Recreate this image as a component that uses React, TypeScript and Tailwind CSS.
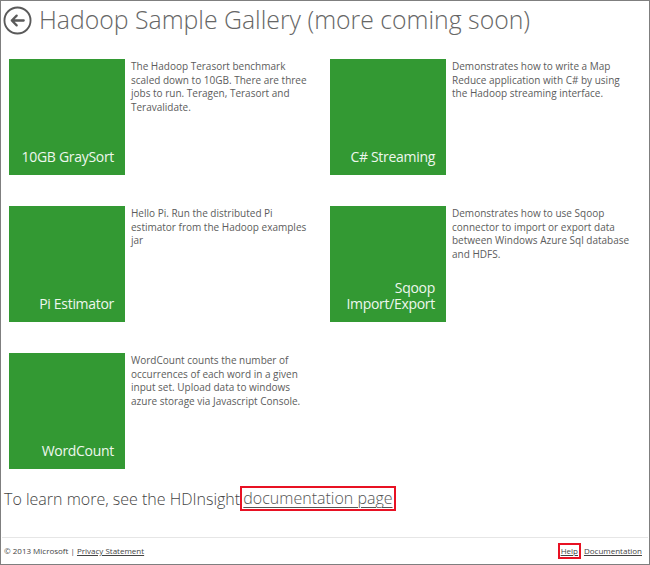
const samples = [
  {
    id: "graysort",
    title: ["10GB GraySort"],
    lines: [
      "The Hadoop Terasort benchmark",
      "scaled down to 10GB. There are three",
      "jobs to run. Teragen, Terasort and",
      "Teravalidate.",
    ],
  },
  {
    id: "streaming",
    title: ["C# Streaming"],
    lines: [
      "Demonstrates how to write a Map",
      "Reduce application with C# by using",
      "the Hadoop streaming interface.",
    ],
  },
  {
    id: "pi",
    title: ["Pi Estimator"],
    lines: [
      "Hello Pi. Run the distributed Pi",
      "estimator from the Hadoop examples",
      "jar",
    ],
  },
  {
    id: "sqoop",
    title: ["Sqoop", "Import/Export"],
    lines: [
      "Demonstrates how to use Sqoop",
      "connector to import or export data",
      "between Windows Azure Sql database",
      "and HDFS.",
    ],
  },
  {
    id: "wordcount",
    title: ["WordCount"],
    lines: [
      "WordCount counts the number of",
      "occurrences of each word in a given",
      "input set. Upload data to windows",
      "azure storage via Javascript Console.",
    ],
  },
];

function BackButton() {
  return (
    <svg width="29" height="29" viewBox="0 0 28 28" className="shrink-0">
      <circle cx="14" cy="14" r="12.6" fill="none" stroke="#5a5a5a" strokeWidth="1.8" />
      <path
        d="M20 14H8.5M13.2 9.3L8.5 14L13.2 18.7"
        fill="none"
        stroke="#5a5a5a"
        strokeWidth="2.2"
        strokeLinecap="round"
        strokeLinejoin="round"
      />
    </svg>
  );
}

export default function App() {
  return (
    <div className="w-[650px] h-[565px] bg-white border border-[#7f7f7f] flex flex-col overflow-hidden font-['Open_Sans',sans-serif]">
      {/* Header */}
      <div className="flex items-start gap-[7px] pl-[2px] pt-[5px] h-[58px]">
        <BackButton />
        <h1 className="text-[24.8px] font-light text-[#666] leading-[30px] -mt-[2px]">
          Hadoop Sample Gallery (more coming soon)
        </h1>
      </div>

      {/* Grid */}
      <div className="grid grid-cols-[321px_321px] gap-y-[31px] pl-[8px]">
        {samples.map(({ id, title, lines }) => (
          <div key={id} className="flex gap-[6px]">
            <div className="w-[116px] h-[116px] bg-[#339933] flex flex-col justify-end items-end pr-[11px] pb-[10px] shrink-0">
              <span className="text-[14px] leading-[16px] tracking-[-0.3px] text-[#eef7ee] text-right">
                {title.map((t, i) => (
                  <span key={t}>
                    {i > 0 && <br />}
                    {t}
                  </span>
                ))}
              </span>
            </div>
            <p className="text-[10px] leading-[13.5px] text-[#5c5c5c] pt-[1px]">
              {lines.map((l, i) => (
                <span key={i} className="block whitespace-nowrap">
                  {l}
                </span>
              ))}
            </p>
          </div>
        ))}
      </div>

      {/* Learn more */}
      <div className="mt-[17px] pl-[3px] text-[16px] font-light text-[#444] flex items-center">
        <span>To learn more, see the HDInsight&nbsp;</span>
        <span className="border-2 border-[#e81123] pl-[1px] pr-[1px] leading-[21px] -ml-[4px]">
          <a href="#" className="underline underline-offset-[3px] decoration-1 text-[#555]">
            documentation page
          </a>
        </span>
      </div>

      {/* Footer */}
      <div className="mt-auto mx-[1px] border-t border-[#e6e6e6] h-[27px] flex items-center justify-between pl-[2px] pr-[6px] text-[8px] text-[#444]">
        <div>
          © 2013 Microsoft | <a href="#" className="underline">Privacy Statement</a>
        </div>
        <div className="flex items-center gap-[3px]">
          <span className="border-2 border-[#e81123] px-[1px] leading-[12px]">
            <a href="#" className="underline">Help</a>
          </span>
          <a href="#" className="underline">Documentation</a>
        </div>
      </div>
    </div>
  );
}
